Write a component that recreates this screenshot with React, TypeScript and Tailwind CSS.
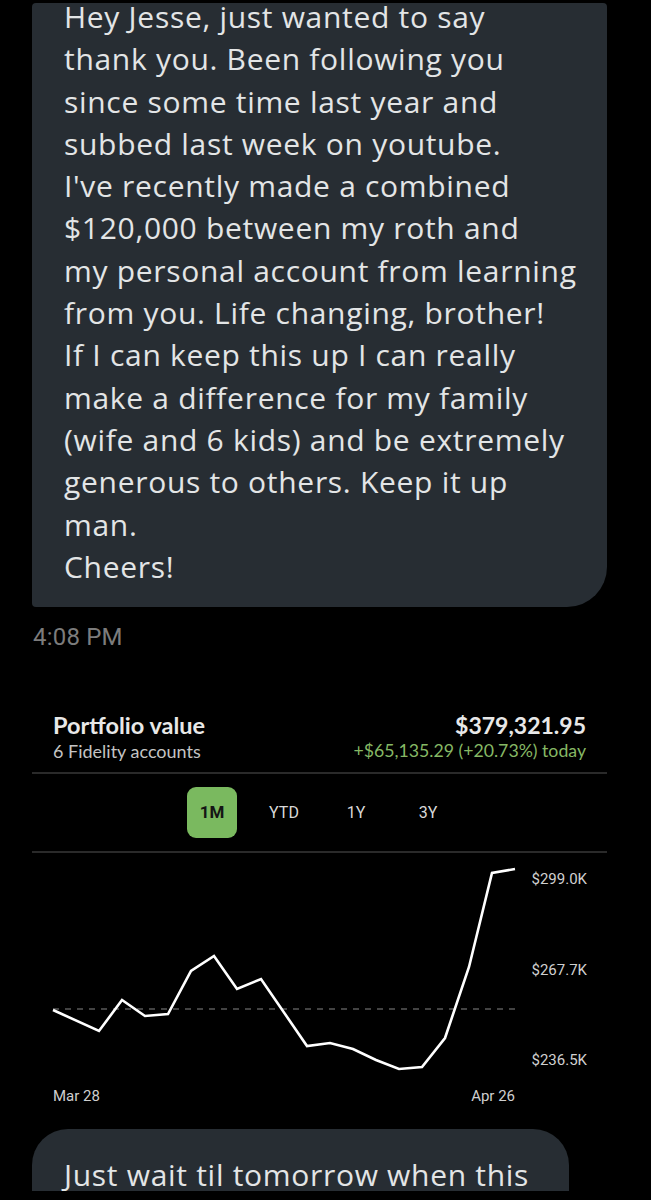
const message = [
  "Hey Jesse, just wanted to say",
  "thank you. Been following you",
  "since some time last year and",
  "subbed last week on youtube.",
  "I've recently made a combined",
  "$120,000 between my roth and",
  "my personal account from learning",
  "from you. Life changing, brother!",
  "If I can keep this up I can really",
  "make a difference for my family",
  "(wife and 6 kids) and be extremely",
  "generous to others. Keep it up",
  "man.",
  "Cheers!",
];

const points: [number, number][] = [
  [53, 157], [99, 178], [122, 147], [145, 163], [168, 161], [191, 118],
  [214, 103], [237, 136], [261, 126], [307, 193], [330, 190], [353, 196],
  [376, 207], [399, 216], [422, 214], [445, 185], [469, 114], [492, 20],
  [515, 16],
];

const ranges = ["1M", "YTD", "1Y", "3Y"];

export default function App() {
  return (
    <div className="w-[651px] h-[1200px] overflow-hidden bg-black">
      {/* Message bubble */}
      <div className="mt-[3px] ml-[32px] w-[575px] rounded-[4px] rounded-br-[40px] bg-[#272d33] pl-[32px] pb-[19px]">
        <div className="font-['Open_Sans',sans-serif] text-[30px] tracking-[0.7px] leading-[42.3px] text-[#e3e5e6]">
          {message.map((line, i) => (
            <div
              key={i}
              className={i === 0 ? "whitespace-nowrap leading-[28px] mb-[7.3px]" : "whitespace-nowrap"}
            >
              {line}
            </div>
          ))}
        </div>
      </div>

      <div className="mt-[17px] ml-[33px] font-['Roboto',sans-serif] text-[24px] tracking-[0.2px] leading-[26px] text-[#7c7c7c]">
        4:08 PM
      </div>

      {/* Portfolio card */}
      <div className="mt-[62px] ml-[32px] w-[575px] font-['Lato',sans-serif]">
        <div className="flex items-start justify-between px-[21px]">
          <div>
            <div className="text-[23.5px] font-bold leading-[26px] text-[#e8e8e8]">Portfolio value</div>
            <div className="text-[18px] leading-[26px] text-[#c4c4c4]">6 Fidelity accounts</div>
          </div>
          <div className="text-right">
            <div className="text-[23px] font-bold leading-[26px] text-[#e8e8e8]">$379,321.95</div>
            <div className="text-[17.7px] leading-[26px] text-[#86b865]">+$65,135.29 (+20.73%) today</div>
          </div>
        </div>
        <div className="mt-[8px] h-[2px] bg-[#2a2a2a]" />
        <div className="flex gap-[22px] pl-[155px] pt-[13px] pb-[13px] font-['Roboto',sans-serif] text-[16px]">
          {ranges.map((r, i) => (
            <div
              key={r}
              className={
                i === 0
                  ? "flex h-[51px] w-[50px] items-center justify-center rounded-[9px] bg-[#7ab95f] font-bold text-[17px] text-[#151515]"
                  : "flex h-[51px] w-[50px] items-center justify-center text-[#d8d8d8]"
              }
            >
              {r}
            </div>
          ))}
        </div>
        <div className="h-[2px] bg-[#2a2a2a]" />
      </div>

      {/* Chart */}
      <div className="flex">
        <svg width="530" height="222" viewBox="0 0 530 222" className="shrink-0">
          <line x1="53" y1="156" x2="515" y2="156" stroke="#5a5a5a" strokeWidth="1.5" strokeDasharray="6 6" />
          <polyline
            points={points.map((p) => p.join(",")).join(" ")}
            fill="none"
            stroke="#ffffff"
            strokeWidth="2.6"
            strokeLinejoin="miter"
          />
        </svg>
        <div className="flex h-[216px] w-[57px] flex-col justify-between pt-[17px] text-right font-['Roboto',sans-serif] text-[15px] leading-[18px] text-[#d0d0d0]">
          <div>$299.0K</div>
          <div>$267.7K</div>
          <div>$236.5K</div>
        </div>
      </div>
      <div className="ml-[53px] mt-[12px] flex w-[462px] justify-between font-['Roboto',sans-serif] text-[15px] leading-[18px] text-[#cfcfcf]">
        <span>Mar 28</span>
        <span>Apr 26</span>
      </div>

      {/* Next bubble, cut off */}
      <div className="mt-[24px] ml-[32px] h-[62px] w-[537px] overflow-hidden rounded-t-[36px] bg-[#272d33] pl-[32px] pt-[25px]">
        <div className="whitespace-nowrap font-['Open_Sans',sans-serif] text-[30px] tracking-[0.7px] leading-[42px] text-[#e3e5e6]">
          Just wait til tomorrow when this
        </div>
      </div>
    </div>
  );
}
